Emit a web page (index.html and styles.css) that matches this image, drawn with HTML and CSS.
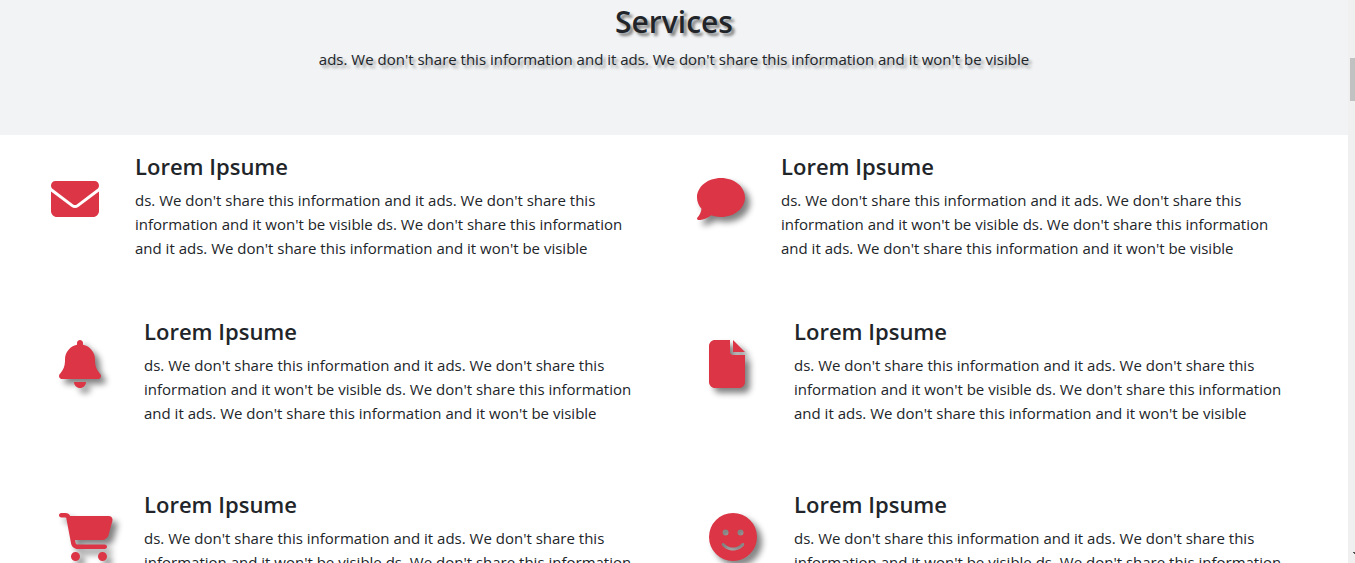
FILE: index.html
```html
<!DOCTYPE html>
<html lang="en">
<head>
<meta charset="utf-8">
<title>Services</title>
<link rel="stylesheet" href="styles.css">
</head>
<body>
<div class="page">
  <main class="content">
    <header class="intro">
      <h2 class="intro-title">Services</h2>
      <p class="intro-text">ads. We don't share this information and it ads. We don't share this information and it won't be visible</p>
    </header>
    <section class="services services-first">
      <article class="service">
        <div class="icon-box"><svg class="icon" viewBox="0 0 512 512" aria-hidden="true"><path d="M48 64C21.5 64 0 85.5 0 112c0 15.1 7.1 29.3 19.2 38.4L236.8 313.6c11.4 8.5 27 8.5 38.4 0L492.8 150.4c12.1-9.1 19.2-23.3 19.2-38.4c0-26.5-21.5-48-48-48H48zM0 176V384c0 35.3 28.7 64 64 64H448c35.3 0 64-28.7 64-64V176L294.4 339.2c-22.8 17.1-54 17.1-76.8 0L0 176z"/></svg></div>
        <div class="service-body">
          <h4 class="service-title">Lorem Ipsume</h4>
          <p class="service-text">ds. We don't share this information and it ads. We don't share this information and it won't be visible ds. We don't share this information and it ads. We don't share this information and it won't be visible</p>
        </div>
      </article>
      <article class="service">
        <div class="icon-box"><svg class="icon icon-shadow" viewBox="0 0 512 512" aria-hidden="true"><path d="M512 240c0 114.9-114.6 208-256 208c-37.1 0-72.3-6.4-104.1-17.9c-11.9 8.7-31.3 20.6-54.3 30.6C73.6 471.1 44.7 480 16 480c-6.5 0-12.3-3.9-14.8-9.9c-2.5-6-1.1-12.8 3.4-17.4l.3-.3c.3-.3 .7-.7 1.3-1.4c1.1-1.2 2.8-3.1 4.9-5.7c4.1-5 9.6-12.4 15.2-21.6c10-16.6 19.5-38.4 21.4-62.9C17.7 326.8 0 285.1 0 240C0 125.1 114.6 32 256 32s256 93.1 256 208z"/></svg></div>
        <div class="service-body">
          <h4 class="service-title">Lorem Ipsume</h4>
          <p class="service-text">ds. We don't share this information and it ads. We don't share this information and it won't be visible ds. We don't share this information and it ads. We don't share this information and it won't be visible</p>
        </div>
      </article>
    </section>
    <section class="services services-more">
      <article class="service">
        <div class="icon-box"><svg class="icon icon-shadow" viewBox="0 0 448 512" aria-hidden="true"><path d="M224 0c-17.7 0-32 14.3-32 32V51.2C119 66 64 130.6 64 208v18.8c0 47-17.3 92.4-48.5 127.6l-7.4 8.3c-8.4 9.4-10.4 22.9-5.3 34.4S19.4 416 32 416H416c12.6 0 24-7.4 29.2-18.9s3.1-25-5.3-34.4l-7.4-8.3C401.3 319.2 384 273.9 384 226.8V208c0-77.4-55-142-128-156.8V32c0-17.7-14.3-32-32-32zm45.3 493.3c12-12 18.7-28.3 18.7-45.3H224 160c0 17 6.7 33.3 18.7 45.3s28.3 18.7 45.3 18.7s33.3-6.7 45.3-18.7z"/></svg></div>
        <div class="service-body">
          <h4 class="service-title">Lorem Ipsume</h4>
          <p class="service-text">ds. We don't share this information and it ads. We don't share this information and it won't be visible ds. We don't share this information and it ads. We don't share this information and it won't be visible</p>
        </div>
      </article>
      <article class="service">
        <div class="icon-box"><svg class="icon icon-shadow" viewBox="0 0 384 512" aria-hidden="true"><path d="M0 64C0 28.7 28.7 0 64 0H224V128c0 17.7 14.3 32 32 32H384V448c0 35.3-28.7 64-64 64H64c-35.3 0-64-28.7-64-64V64zm384 64H256V0L384 128z"/></svg></div>
        <div class="service-body">
          <h4 class="service-title">Lorem Ipsume</h4>
          <p class="service-text">ds. We don't share this information and it ads. We don't share this information and it won't be visible ds. We don't share this information and it ads. We don't share this information and it won't be visible</p>
        </div>
      </article>
      <article class="service">
        <div class="icon-box"><svg class="icon icon-shadow" viewBox="0 0 576 512" aria-hidden="true"><path d="M0 24C0 10.7 10.7 0 24 0H69.5c22 0 41.5 12.8 50.6 32h411c26.3 0 45.5 25 38.6 50.4l-41 152.3c-8.5 31.4-37 53.3-69.5 53.3H170.7l5.4 28.5c2.2 11.3 12.1 19.5 23.6 19.5H488c13.3 0 24 10.7 24 24s-10.7 24-24 24H199.7c-34.6 0-64.3-24.6-70.7-58.5L77.4 54.5c-.7-3.8-4-6.5-7.9-6.5H24C10.7 48 0 37.3 0 24zM128 464a48 48 0 1 1 96 0 48 48 0 1 1-96 0zm336-48a48 48 0 1 1 0 96 48 48 0 1 1 0-96z"/></svg></div>
        <div class="service-body">
          <h4 class="service-title">Lorem Ipsume</h4>
          <p class="service-text">ds. We don't share this information and it ads. We don't share this information and it won't be visible ds. We don't share this information and it ads. We don't share this information and it won't be visible</p>
        </div>
      </article>
      <article class="service">
        <div class="icon-box"><svg class="icon icon-shadow" viewBox="0 0 512 512" aria-hidden="true"><path d="M256 512A256 256 0 1 0 256 0a256 256 0 1 0 0 512zM164.1 325.5C182 346.2 212.6 368 256 368s74-21.8 91.9-42.5c5.8-6.7 15.9-7.4 22.6-1.6s7.4 15.9 1.6 22.6C349.8 372.1 311.1 400 256 400s-93.8-27.9-116.1-53.5c-5.8-6.7-5.1-16.8 1.6-22.6s16.8-5.1 22.6 1.6zM144.4 208a32 32 0 1 1 64 0 32 32 0 1 1-64 0zm192-32a32 32 0 1 1 0 64 32 32 0 1 1 0-64z"/></svg></div>
        <div class="service-body">
          <h4 class="service-title">Lorem Ipsume</h4>
          <p class="service-text">ds. We don't share this information and it ads. We don't share this information and it won't be visible ds. We don't share this information and it ads. We don't share this information and it won't be visible</p>
        </div>
      </article>
    </section>
  </main>
  <div class="scroll-track" aria-hidden="true">
    <div class="scroll-thumb"></div>
    <svg class="scroll-arrow" viewBox="0 0 2 2"><path d="M0 0h2v2H1V1H0z"/></svg>
  </div>
</div>
</body>
</html>
```
FILE: styles.css
```css
* {
  box-sizing: border-box;
}

body {
  margin: 0;
  background: #fff;
  color: #212529;
  font-family: "Segoe UI", "Open Sans", "Noto Sans", sans-serif;
  font-size: 15px;
  line-height: 24px;
}

h2, h4, p {
  margin: 0;
}

.page {
  display: flex;
  height: 100vh;
  overflow: hidden;
}

.content {
  flex: 1;
  min-width: 0;
}

.intro {
  padding: 3px 16px 64px;
  background: #f1f3f5;
  text-align: center;
}

.intro-title {
  margin-bottom: 6px;
  font-size: 30px;
  font-weight: 600;
  line-height: 38px;
  text-shadow: 3px 3px 3px gray;
}

.intro-text {
  text-shadow: 3px 3px 3px #999;
}

.services {
  display: grid;
  grid-template-columns: 1fr 1fr;
}

.services-first {
  padding: 17px 5px 0 51px;
}

.services-more {
  column-gap: 11px;
  row-gap: 65px;
  padding: 57px 0 64px 59px;
}

.service {
  display: flex;
}

.icon-box {
  flex: none;
  width: 85px;
  padding-top: 23px;
}

.services-first .icon-box {
  width: 84px;
}

.icon {
  display: block;
  height: 48px;
  fill: #dc3545;
  overflow: visible;
}

.icon-shadow {
  filter: drop-shadow(5px 5px 3px gray);
}

.service-body {
  flex: 1;
  padding-right: 46px;
}

.service-title {
  margin-bottom: 7px;
  font-size: 22px;
  font-weight: 600;
  line-height: 29px;
}

.scroll-track {
  display: flex;
  flex-direction: column;
  align-items: flex-end;
  justify-content: space-between;
  width: 7px;
  padding: 58px 0 9px;
  background: #f0f0f0;
}

.scroll-thumb {
  width: 5px;
  height: 43px;
  background: #c1c1c1;
}

.scroll-arrow {
  width: 2px;
  height: 2px;
  fill: #505050;
}
```
